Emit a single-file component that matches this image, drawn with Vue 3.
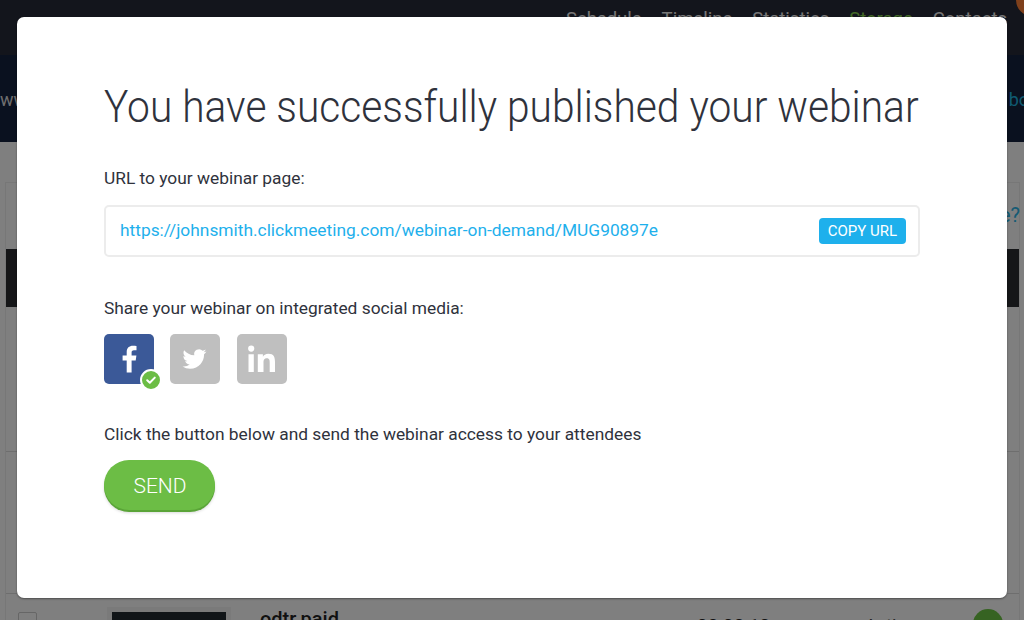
<template>
  <div class="page">
    <header class="topbar">
      <nav class="nav">
        <span>Schedule</span>
        <span>Timeline</span>
        <span>Statistics</span>
        <span class="current">Storage</span>
        <span>Contacts</span>
      </nav>
      <i class="avatar"></i>
    </header>
    <div class="band">
      <span>www</span>
      <span class="band-link">bo</span>
    </div>
    <main class="content">
      <div class="panel">
        <div class="help"><span>e?</span></div>
        <div class="thead"></div>
        <div class="row tall"></div>
        <div class="row tall2"></div>
        <div class="row last">
          <i class="check"></i>
          <i class="thumb"></i>
          <strong class="name">odtr.paid</strong>
          <span class="time">00:00:10</span>
          <span class="state">Active</span>
          <i class="go"></i>
        </div>
      </div>
    </main>

    <div class="overlay"></div>

    <section class="modal">
      <h1>You have successfully published your webinar</h1>
      <p class="label">URL to your webinar page:</p>
      <div class="url-box">
        <a class="url">https://johnsmith.clickmeeting.com/webinar-on-demand/MUG90897e</a>
        <button class="copy" type="button">COPY URL</button>
      </div>
      <p class="label share">Share your webinar on integrated social media:</p>
      <div class="socials">
        <div class="social fb">
          <svg viewBox="0 0 50 50" width="50" height="50">
            <path fill="#fff" d="M27.600 38.500V26.400h4.100l.7-4.800h-4.800v-3c0-1.400.5-2.300 2.400-2.300h2.500v-4.300c-.5-.1-1.900-.2-3.600-.2-3.700 0-6.200 2.200-6.200 6.300v3.500h-4.100v4.800h4.100v12.100z" />
          </svg>
          <span class="tick">
            <svg viewBox="0 0 18 18" width="18" height="18">
              <path fill="none" stroke="#fff" stroke-width="2" stroke-linecap="round" stroke-linejoin="round" d="M5.200 9.300l2.600 2.500 5-5.200" />
            </svg>
          </span>
        </div>
        <div class="social">
          <svg viewBox="0 0 50 50" width="50" height="50">
            <path transform="translate(12.500 13)" fill="#fff" d="M23.950 4.570a10 10 0 0 1-2.820.77 4.960 4.960 0 0 0 2.160-2.720c-.95.550-2 .96-3.130 1.200a4.920 4.920 0 0 0-8.380 4.480C7.690 8.090 4.070 6.130 1.640 3.160a4.820 4.820 0 0 0-.66 2.470c0 1.710.87 3.210 2.190 4.100a4.900 4.900 0 0 1-2.230-.62v.06a4.920 4.920 0 0 0 3.950 4.830 5 5 0 0 1-2.210.08 4.940 4.940 0 0 0 4.600 3.420A9.870 9.870 0 0 1 0 19.540a14 14 0 0 0 7.560 2.210c9.050 0 14-7.500 14-13.980 0-.21 0-.42-.02-.63a9.940 9.940 0 0 0 2.410-2.550z" />
          </svg>
        </div>
        <div class="social">
          <svg viewBox="0 0 50 50" width="50" height="50">
            <path transform="translate(-1 0)" fill="#fff" d="M12.500 20.300h5.300V38h-5.300zM15.200 11.500a3.100 3.100 0 1 1 0 6.200 3.100 3.100 0 0 1 0-6.200zM21.800 20.300h5.100v2.400c.8-1.500 2.700-2.900 5.400-2.900 5.600 0 6.700 3.500 6.700 8.200V38h-5.300v-8.900c0-2.200 0-4.800-2.900-4.800s-3.300 2.200-3.300 4.600V38h-5.700z" />
          </svg>
        </div>
      </div>
      <p class="label send-label">Click the button below and send the webinar access to your attendees</p>
      <button class="send" type="button">SEND</button>
    </section>
  </div>
</template>

<script setup>
</script>

<style scoped>
.page {
  position: relative;
  width: 1024px;
  height: 620px;
  overflow: hidden;
  background: #fff;
  font-family: Roboto, "Liberation Sans", sans-serif;
}

.topbar {
  display: flex;
  justify-content: flex-end;
  align-items: flex-start;
  height: 55px;
  background: #262a38;
}

.nav {
  display: flex;
  gap: 20px;
  margin-top: 8px;
  margin-right: 17px;
  color: #eee;
  font-size: 18.500px;
}

.nav .current {
  color: #86d04f;
}

.avatar {
  position: absolute;
  top: -16px;
  right: -24px;
  width: 32px;
  height: 32px;
  border-radius: 50%;
  background: #ff8036;
}

.band {
  display: flex;
  justify-content: space-between;
  height: 87px;
  padding-top: 34px;
  box-sizing: border-box;
  background: #14223f;
  color: #ddd;
  font-size: 18px;
}

.band-link {
  margin-right: -5px;
  color: #1eb4e0;
}

.content {
  padding: 40px 4px 0 5px;
  height: 478px;
  box-sizing: border-box;
  background: #fff;
}

.panel {
  border: 1px solid #eee;
  height: 600px;
}

.help {
  height: 66px;
  padding-top: 20px;
  box-sizing: border-box;
  text-align: right;
  color: #2ab5e8;
  font-size: 20px;
}

.help span {
  margin-right: -1px;
}

.thead {
  height: 58px;
  background: #2a2c31;
}

.row {
  border-bottom: 1px solid #ddd;
}

.tall {
  height: 144px;
}

.tall2 {
  height: 141px;
}

.last {
  display: flex;
  align-items: flex-start;
  padding-top: 13px;
  color: #222;
}

.check {
  flex: none;
  width: 19px;
  height: 19px;
  margin: 5px 70px 0 12px;
  border: 1px solid #ccc;
  box-sizing: border-box;
  border-radius: 2px;
}

.thumb {
  flex: none;
  width: 124px;
  height: 40px;
  box-sizing: border-box;
  border: 5px solid #f4f4f4;
  background: #222a30;
}

.name {
  flex: 0 0 437px;
  margin: 0 0 0 29px;
  font-size: 20px;
  font-weight: 500;
  line-height: 24px;
}

.time {
  flex: 0 0 168px;
  margin-top: 8px;
  font-size: 19px;
  line-height: 22px;
}

.state {
  flex: 0 0 108px;
  margin-top: 8px;
  color: #444;
  font-size: 18px;
  line-height: 22px;
}

.go {
  flex: none;
  width: 30px;
  height: 30px;
  margin-top: 2px;
  border-radius: 50%;
  background: #6cc644;
}

.overlay {
  position: absolute;
  inset: 0;
  background: rgba(0, 0, 0, 0.5);
}

.modal {
  position: absolute;
  top: 17px;
  left: 17px;
  width: 990px;
  height: 581px;
  padding: 55px 87px 0;
  box-sizing: border-box;
  border-radius: 7px;
  background: #fff;
  box-shadow: 0 1px 2px rgba(0, 0, 0, 0.4);
  color: #2f323c;
}

h1 {
  margin: 0;
  font-size: 45px;
  font-weight: 300;
  line-height: 70px;
  white-space: nowrap;
  transform: scaleX(0.9045);
  transform-origin: left center;
}

.label {
  margin: 0;
  font-size: 17.350px;
  line-height: 24px;
}

h1 + .label {
  margin-top: 24px;
}

.url-box {
  display: flex;
  justify-content: space-between;
  align-items: center;
  height: 52px;
  margin-top: 15px;
  padding: 0 12px 2px 14px;
  box-sizing: border-box;
  border: 2px solid #ececec;
  border-radius: 5px;
}

.url {
  color: #1eb0ec;
  font-size: 17.350px;
}

.copy {
  height: 26px;
  margin-top: 2px;
  padding: 0 9px;
  border: 0;
  border-radius: 4px;
  background: #1eb0ec;
  color: #fff;
  font: 400 15px Roboto, "Liberation Sans", sans-serif;
}

.share {
  margin-top: 39px;
}

.socials {
  display: flex;
  gap: 16px;
  margin-top: 14px;
}

.social {
  position: relative;
  width: 50px;
  height: 50px;
  border-radius: 5px;
  background: #bfbfbf;
}

.social:last-child {
  margin-left: 1px;
}

.social svg {
  display: block;
}

.fb {
  background: #3b5998;
}

.tick {
  position: absolute;
  right: -8px;
  bottom: -7px;
  display: block;
  width: 18px;
  height: 18px;
  border: 2px solid #fff;
  border-radius: 50%;
  background: #6cbd45;
}

.send-label {
  margin-top: 38px;
}

.send {
  display: block;
  width: 111px;
  height: 50px;
  margin-top: 14px;
  padding: 2px 0 0 1px;
  border: 0;
  border-radius: 25px;
  background: #6cbd45;
  box-shadow: 0 2px 0 #5aa438, 0 3px 3px rgba(0, 0, 0, 0.15);
  color: #fff;
  font: 300 21px Roboto, "Liberation Sans", sans-serif;
}
</style>
